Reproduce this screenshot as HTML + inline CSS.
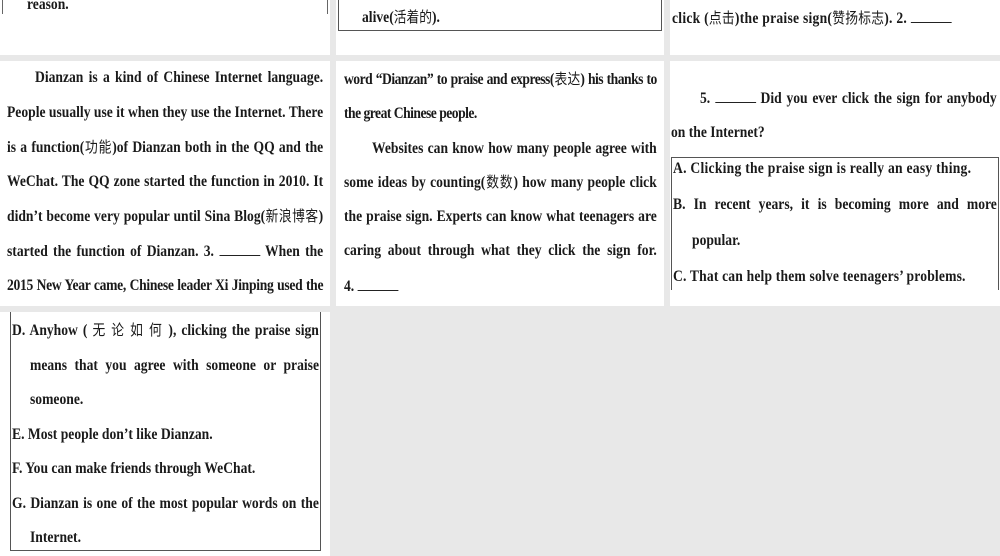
<!DOCTYPE html>
<html><head><meta charset="utf-8"><style>
body{margin:0;width:1000px;height:556px;background:#e8e8e8;position:relative;overflow:hidden;font-family:"Liberation Serif","Noto Serif CJK SC",serif;font-weight:bold;color:#1a1a1a}
.p{position:absolute;background:#fff}
.b{position:absolute;border:1px solid #555;box-sizing:border-box}
.l{position:absolute;font-size:16px;line-height:20px;height:20px;white-space:nowrap;transform-origin:0 0;transform:scaleX(.85)}
.j{text-align:justify;text-align-last:justify}
.u{display:inline-block;width:48px;border-bottom:1px solid #222;height:14px}
.c{font-family:"Noto Sans CJK SC",sans-serif;font-weight:normal;font-size:15px;line-height:1}
</style></head><body>
<div class="p" style="left:0;top:0;width:330px;height:55px"></div>
<div class="p" style="left:336px;top:0;width:328px;height:55px"></div>
<div class="p" style="left:670px;top:0;width:330px;height:55px"></div>
<div class="p" style="left:0;top:61px;width:330px;height:245px"></div>
<div class="p" style="left:336px;top:61px;width:328px;height:245px"></div>
<div class="p" style="left:670px;top:61px;width:330px;height:245px"></div>
<div class="p" style="left:0;top:312px;width:330px;height:244px"></div>

<div style="position:absolute;left:2px;top:0;width:1px;height:14px;background:#666"></div>
<div style="position:absolute;left:327px;top:0;width:1px;height:14px;background:#666"></div>
<div class="b" style="left:338px;top:-2px;width:324px;height:33px"></div>
<div class="b" style="left:671px;top:157px;width:328px;height:133px;border-bottom:none"></div>
<div class="b" style="left:10px;top:312px;width:311px;height:239px;border-top:none"></div>

<div class="l" style="left:27px;top:-5px">reason.</div>
<div class="l" style="left:362px;top:8px">alive(<span class="c">活着的</span>).</div>
<div class="l" style="left:672px;top:8px;letter-spacing:.3px">click (<span class="c">点击</span>)the praise sign(<span class="c">赞扬标志</span>). 2. <span class="u"></span></div>

<div class="l j" style="left:35px;top:68px;width:339px">Dianzan is a kind of Chinese Internet language.</div>
<div class="l j" style="left:7px;top:103px;width:372px">People usually use it when they use the Internet. There</div>
<div class="l j" style="left:7px;top:138px;width:372px">is a function(<span class="c">功能</span>)of Dianzan both in the QQ and the</div>
<div class="l j" style="left:7px;top:172px;width:372px">WeChat. The QQ zone started the function in 2010. It</div>
<div class="l j" style="left:7px;top:207px;width:372px">didn’t become very popular until Sina Blog(<span class="c">新浪博客</span>)</div>
<div class="l j" style="left:7px;top:241px;width:372px">started the function of Dianzan. 3. <span class="u"></span> When the</div>
<div class="l j" style="left:7px;top:276px;width:372px;letter-spacing:-.35px">2015 New Year came, Chinese leader Xi Jinping used the</div>

<div class="l j" style="left:344px;top:70px;width:368px;letter-spacing:-.6px">word “Dianzan” to praise and express(<span class="c">表达</span>) his thanks to</div>
<div class="l" style="left:344px;top:104px;letter-spacing:-.6px">the great Chinese people.</div>
<div class="l j" style="left:372px;top:139px;width:335px">Websites can know how many people agree with</div>
<div class="l j" style="left:344px;top:173px;width:368px">some ideas by counting(<span class="c">数数</span>) how many people click</div>
<div class="l j" style="left:344px;top:207px;width:368px">the praise sign. Experts can know what teenagers are</div>
<div class="l j" style="left:344px;top:241px;width:368px">caring about through what they click the sign for.</div>
<div class="l" style="left:344px;top:276px">4. <span class="u"></span></div>

<div class="l j" style="left:700px;top:88px;width:349px">5. <span class="u"></span> Did you ever click the sign for anybody</div>
<div class="l" style="left:671px;top:123px">on the Internet?</div>
<div class="l" style="left:673px;top:159px;letter-spacing:.3px">A. Clicking the praise sign is really an easy thing.</div>
<div class="l j" style="left:673px;top:195px;width:381px">B. In recent years, it is becoming more and more</div>
<div class="l" style="left:692px;top:231px">popular.</div>
<div class="l" style="left:673px;top:267px;letter-spacing:.2px">C. That can help them solve teenagers’ problems.</div>

<div class="l j" style="left:12px;top:321px;width:361px">D. Anyhow ( <span class="c">无 论 如 何</span> ), clicking the praise sign</div>
<div class="l j" style="left:30px;top:356px;width:340px">means that you agree with someone or praise</div>
<div class="l" style="left:30px;top:390px">someone.</div>
<div class="l" style="left:12px;top:425px">E. Most people don’t like Dianzan.</div>
<div class="l" style="left:12px;top:459px">F. You can make friends through WeChat.</div>
<div class="l j" style="left:12px;top:494px;width:361px">G. Dianzan is one of the most popular words on the</div>
<div class="l" style="left:30px;top:528px">Internet.</div>
</body></html>
